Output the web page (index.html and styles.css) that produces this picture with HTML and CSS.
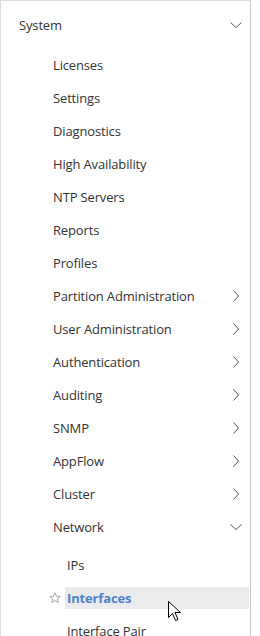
FILE: index.html
```html
<!DOCTYPE html>
<html>
<head>
  <title>Navigation</title>
  <link rel="stylesheet" href="styles.css">
</head>
<body>
  <div class="nav">
    <div class="row top">
      <span>System</span>
      <svg class="chev" width="12" height="12" viewBox="0 0 12 12"><path d="M0.5 3.5 L6 8.5 L11.5 3.5" /></svg>
    </div>

    <ul class="sub">
      <li class="row">Licenses</li>
      <li class="row">Settings</li>
      <li class="row">Diagnostics</li>
      <li class="row">High Availability</li>
      <li class="row">NTP Servers</li>
      <li class="row">Reports</li>
      <li class="row">Profiles</li>
      <li class="row"><span>Partition Administration</span>
        <svg class="chev" width="12" height="12" viewBox="0 0 12 12"><path d="M3.5 0.5 L8.5 6 L3.5 11.5" /></svg></li>
      <li class="row"><span>User Administration</span>
        <svg class="chev" width="12" height="12" viewBox="0 0 12 12"><path d="M3.5 0.5 L8.5 6 L3.5 11.5" /></svg></li>
      <li class="row"><span>Authentication</span>
        <svg class="chev" width="12" height="12" viewBox="0 0 12 12"><path d="M3.5 0.5 L8.5 6 L3.5 11.5" /></svg></li>
      <li class="row"><span>Auditing</span>
        <svg class="chev" width="12" height="12" viewBox="0 0 12 12"><path d="M3.5 0.5 L8.5 6 L3.5 11.5" /></svg></li>
      <li class="row"><span>SNMP</span>
        <svg class="chev" width="12" height="12" viewBox="0 0 12 12"><path d="M3.5 0.5 L8.5 6 L3.5 11.5" /></svg></li>
      <li class="row"><span>AppFlow</span>
        <svg class="chev" width="12" height="12" viewBox="0 0 12 12"><path d="M3.5 0.5 L8.5 6 L3.5 11.5" /></svg></li>
      <li class="row"><span>Cluster</span>
        <svg class="chev" width="12" height="12" viewBox="0 0 12 12"><path d="M3.5 0.5 L8.5 6 L3.5 11.5" /></svg></li>
      <li class="row"><span>Network</span>
        <svg class="chev" width="12" height="12" viewBox="0 0 12 12"><path d="M0.5 3.5 L6 8.5 L11.5 3.5" /></svg></li>
    </ul>

    <ul class="sub2">
      <li class="row">IPs</li>
      <li class="row active">
        <svg class="star" width="12" height="12" viewBox="0 0 12 12"><path d="M6 0.8 L7.5 4.3 L11.2 4.5 L8.3 6.9 L9.3 10.6 L6 8.5 L2.7 10.6 L3.7 6.9 L0.8 4.5 L4.5 4.3 Z" /></svg>
        <span class="hl">Interfaces</span>
        <svg class="cursor" width="14" height="22" viewBox="0 0 14 22"><path d="M0.5 0.5 L0.5 16.5 L4.5 12.5 L7.5 19.5 L10 18.5 L7 11.5 L12.5 11.5 Z" /></svg>
      </li>
      <li class="row">Interface Pair</li>
    </ul>
  </div>
</body>
</html>
```

FILE: styles.css
```css
/* side navigation panel */
body {
  margin: 0;
  background-color: #fff;
  font-family: "Open Sans", "Noto Sans", sans-serif;
  font-size: 13px;
  letter-spacing: -0.15px;
  color: #333;
}

.nav {
  width: 249px;
  height: 660px;
  border-top: 1px solid #ddd;
  border-left: 1px solid #ddd;
  border-right: 1px solid #c8c8c8;
  overflow: hidden;
}

ul {
  list-style: none;
  margin: 0;
  padding: 0;
}

.row {
  display: flex;
  align-items: center;
  justify-content: space-between;
  height: 33px;
  padding-right: 8px;
}

.top {
  height: 47px;
  padding-left: 18px;
}

.sub .row {
  padding-left: 52px;
}

.sub2 {
  padding-top: 5px;
}

.sub2 .row {
  padding-left: 66px;
}

.chev path {
  fill: none;
  stroke: #4a5568;
  stroke-width: 1;
}

.sub2 .active {
  position: relative;
  padding-left: 64px;
  justify-content: flex-start;
}

.star {
  position: absolute;
  left: 48px;
  top: 11px;
}

.star path {
  fill: none;
  stroke: #aaa;
  stroke-width: 1;
}

.hl {
  flex: 1;
  height: 22px;
  line-height: 22px;
  padding-left: 2px;
  margin-right: -7px;
  background-color: #ebebee;
  color: #4b82c8;
  font-weight: bold;
}

.cursor {
  position: absolute;
  left: 167px;
  top: 20px;
}

.cursor path {
  fill: #fff;
  stroke: #000;
  stroke-width: 1;
}
```
